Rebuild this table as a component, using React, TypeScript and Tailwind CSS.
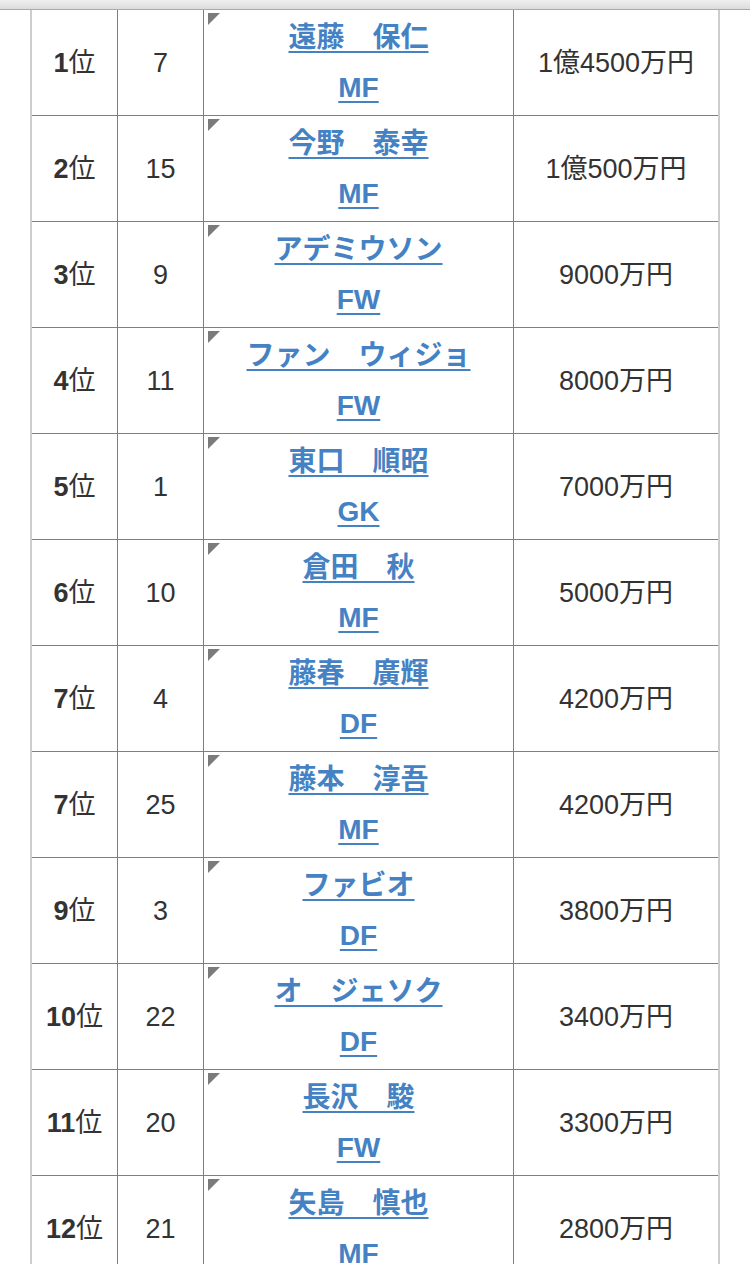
const players = [
  { rank: "1", no: "7", name: "遠藤　保仁", pos: "MF", pay: "1億4500万円" },
  { rank: "2", no: "15", name: "今野　泰幸", pos: "MF", pay: "1億500万円" },
  { rank: "3", no: "9", name: "アデミウソン", pos: "FW", pay: "9000万円" },
  { rank: "4", no: "11", name: "ファン　ウィジョ", pos: "FW", pay: "8000万円" },
  { rank: "5", no: "1", name: "東口　順昭", pos: "GK", pay: "7000万円" },
  { rank: "6", no: "10", name: "倉田　秋", pos: "MF", pay: "5000万円" },
  { rank: "7", no: "4", name: "藤春　廣輝", pos: "DF", pay: "4200万円" },
  { rank: "7", no: "25", name: "藤本　淳吾", pos: "MF", pay: "4200万円" },
  { rank: "9", no: "3", name: "ファビオ", pos: "DF", pay: "3800万円" },
  { rank: "10", no: "22", name: "オ　ジェソク", pos: "DF", pay: "3400万円" },
  { rank: "11", no: "20", name: "長沢　駿", pos: "FW", pay: "3300万円" },
  { rank: "12", no: "21", name: "矢島　慎也", pos: "MF", pay: "2800万円" },
]

function Corner() {
  return (
    <svg className="absolute left-[4px] top-[3px]" width="13" height="13" viewBox="0 0 13 13">
      <polygon points="0,0 12,0 0,12" fill="#7b7b7b" />
    </svg>
  )
}

export default function App() {
  return (
    <div
      className="h-[1264px] overflow-hidden bg-white text-[#333]"
      style={{ fontFamily: '"Liberation Sans", "Noto Sans CJK JP", sans-serif' }}
    >
      <div className="h-[10px] border-b border-[#a9a9a9] bg-gradient-to-b from-[#efefef] to-[#dcdcdc]" />
      <div className="ml-[30px] w-[690px] border-x-2 border-[#cdcdcd]">
        {players.map((p, i) => (
          <div key={i} className="flex h-[106px] border-b border-[#7f7f7f]">
            <div className="flex w-[86px] items-center justify-center border-r border-[#7f7f7f] pt-[2px] text-[27px]">
              <span className="font-bold">{p.rank}</span>
              <span>位</span>
            </div>
            <div className="flex w-[86px] items-center justify-center border-r border-[#7f7f7f] pt-[2px] text-[27px]">
              {p.no}
            </div>
            <div className="relative flex w-[310px] flex-col items-center justify-center border-r border-[#7f7f7f] text-[28px] font-bold text-[#4582c4]">
              <Corner />
              <a href="#" className="leading-[50px] underline underline-offset-[4px]">
                {p.name}
              </a>
              <a href="#" className="leading-[50px] underline underline-offset-[4px]">
                {p.pos}
              </a>
            </div>
            <div className="flex w-[204px] items-center justify-center pt-[2px] text-[27px]">
              {p.pay}
            </div>
          </div>
        ))}
      </div>
    </div>
  )
}
